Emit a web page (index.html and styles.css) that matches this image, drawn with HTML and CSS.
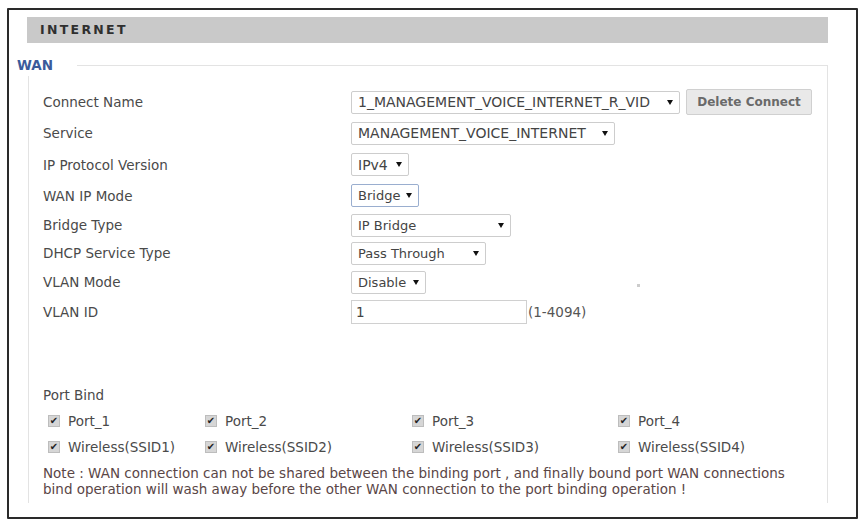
FILE: index.html
```html
<!DOCTYPE html>
<html>
<head>
<meta charset="utf-8">
<link rel="stylesheet" href="styles.css">
</head>
<body>
<div class="frame">
  <div class="header">INTERNET</div>
  <div class="wan">
    <div class="legend">WAN</div>
    <div class="form">
      <div class="label">Connect Name</div>
      <div class="ctrl">
        <span class="sel w-conn">1_MANAGEMENT_VOICE_INTERNET_R_VID<i class="arr"></i></span>
        <button class="btn">Delete Connect</button>
      </div>
      <div class="label">Service</div>
      <div class="ctrl"><span class="sel w-svc">MANAGEMENT_VOICE_INTERNET<i class="arr"></i></span></div>
      <div class="label">IP Protocol Version</div>
      <div class="ctrl"><span class="sel w-ipv">IPv4<i class="arr"></i></span></div>
      <div class="label">WAN IP Mode</div>
      <div class="ctrl"><span class="sel small w-mode focus">Bridge<i class="arr"></i></span></div>
      <div class="label">Bridge Type</div>
      <div class="ctrl"><span class="sel small w-btype">IP Bridge<i class="arr"></i></span></div>
      <div class="label">DHCP Service Type</div>
      <div class="ctrl"><span class="sel small w-dhcp">Pass Through<i class="arr"></i></span></div>
      <div class="label">VLAN Mode</div>
      <div class="ctrl"><span class="sel small w-vlan">Disable<i class="arr"></i></span><span class="dot"></span></div>
      <div class="label">VLAN ID</div>
      <div class="ctrl"><input class="txt" type="text" value="1"><span class="hint">(1-4094)</span></div>
    </div>
    <div class="portbind">Port Bind</div>
    <div class="ports">
      <label class="cb"><span class="box">✔</span>Port_1</label>
      <label class="cb"><span class="box">✔</span>Port_2</label>
      <label class="cb"><span class="box">✔</span>Port_3</label>
      <label class="cb"><span class="box">✔</span>Port_4</label>
      <label class="cb"><span class="box">✔</span>Wireless(SSID1)</label>
      <label class="cb"><span class="box">✔</span>Wireless(SSID2)</label>
      <label class="cb"><span class="box">✔</span>Wireless(SSID3)</label>
      <label class="cb"><span class="box">✔</span>Wireless(SSID4)</label>
    </div>
    <div class="note">Note : WAN connection can not be shared between the binding port , and finally bound port WAN connections<br>bind operation will wash away before the other WAN connection to the port binding operation !</div>
  </div>
</div>
</body>
</html>
```

FILE: styles.css
```css
html, body {
  margin: 0;
  padding: 0;
  background: #fff;
}
body {
  font-family: "DejaVu Sans", Verdana, sans-serif;
  font-size: 13.5px;
  color: #4a4a4a;
}
.frame {
  margin: 8px 0 0 7px;
  width: 851px;
  height: 511px;
  border: 2px solid #2a2a2a;
  border-radius: 1px;
  box-sizing: border-box;
  padding: 7px 0 0 18px;
  overflow: hidden;
}
.header {
  width: 801px;
  height: 26px;
  background: #c9c9c9;
  box-sizing: border-box;
  padding-left: 13px;
  line-height: 26px;
  font-weight: bold;
  font-size: 12.5px;
  letter-spacing: 2.3px;
  color: #2f2f2f;
}
.wan {
  position: relative;
  margin-top: 22px;
  margin-left: 1px;
  width: 800px;
  height: 438px;
  box-sizing: border-box;
  border: 1px solid #e3e3e3;
  border-bottom: none;
  padding: 21px 0 0 14px;
}
.legend {
  position: absolute;
  left: -12px;
  top: -10px;
  background: #fff;
  padding: 0 24px 2px 0;
  height: 18px;
  line-height: 18px;
  font-weight: bold;
  font-size: 13.5px;
  color: #3b5b9b;
}
.form {
  display: grid;
  grid-template-columns: 308px 1fr;
  grid-template-rows: 30px 32px 31px 31px 28px 28px 30px 29px;
}
.label, .ctrl {
  display: flex;
  align-items: center;
}
.label {
  font-size: 13.5px;
  color: #4a4a4a;
}
.ctrl {
  gap: 6px;
  position: relative;
}
.sel {
  position: relative;
  display: inline-flex;
  align-items: center;
  height: 23px;
  box-sizing: border-box;
  border: 1px solid #cdcdcd;
  border-radius: 2px;
  padding-left: 6px;
  font-size: 14px;
  color: #444;
  background: #fff;
  white-space: nowrap;
}
.sel.small {
  font-size: 13px;
}
.sel.focus {
  border-color: #9aaecf;
}
.arr {
  position: absolute;
  right: 6px;
  top: 8px;
  width: 0;
  height: 0;
  border-left: 3px solid transparent;
  border-right: 3px solid transparent;
  border-top: 5px solid #111;
}
.w-conn { width: 329px; }
.w-svc { width: 264px; }
.w-ipv { width: 58px; }
.w-mode { width: 68px; }
.w-btype { width: 160px; }
.w-dhcp { width: 135px; }
.w-vlan { width: 75px; }
.btn {
  height: 26px;
  width: 126px;
  border: 1px solid #d0d0d0;
  border-radius: 2px;
  background: #e9e9e9;
  font-family: "DejaVu Sans", Verdana, sans-serif;
  font-size: 12px;
  font-weight: bold;
  color: #6a6a6a;
  padding: 0;
}
.dot {
  position: absolute;
  left: 286px;
  top: 17px;
  width: 3px;
  height: 3px;
  background: #ccc;
}
.txt {
  width: 176px;
  height: 24px;
  box-sizing: border-box;
  border: 1px solid #d0d0d0;
  padding: 0 4px;
  margin: 0;
  font-family: "DejaVu Sans", Verdana, sans-serif;
  font-size: 13.5px;
  color: #444;
}
.hint {
  margin-left: -5px;
  font-size: 13.5px;
  color: #555;
}
.portbind {
  margin-top: 61px;
  font-size: 13.5px;
  color: #4a4a4a;
}
.ports {
  display: grid;
  grid-template-columns: 157px 207px 206px auto;
  grid-auto-rows: 26px;
  margin-top: 5px;
  padding-left: 5px;
}
.cb {
  display: flex;
  align-items: center;
  gap: 8px;
  font-size: 13.5px;
  color: #4a4a4a;
}
.box {
  width: 12px;
  height: 12px;
  background: #d6d6d6;
  border: 1px solid #bdbdbd;
  box-sizing: border-box;
  display: inline-flex;
  align-items: center;
  justify-content: center;
  font-size: 10px;
  line-height: 1;
  color: #222;
}
.note {
  margin-top: 5px;
  line-height: 16px;
  font-size: 13.5px;
  color: #5a4646;
}
```
